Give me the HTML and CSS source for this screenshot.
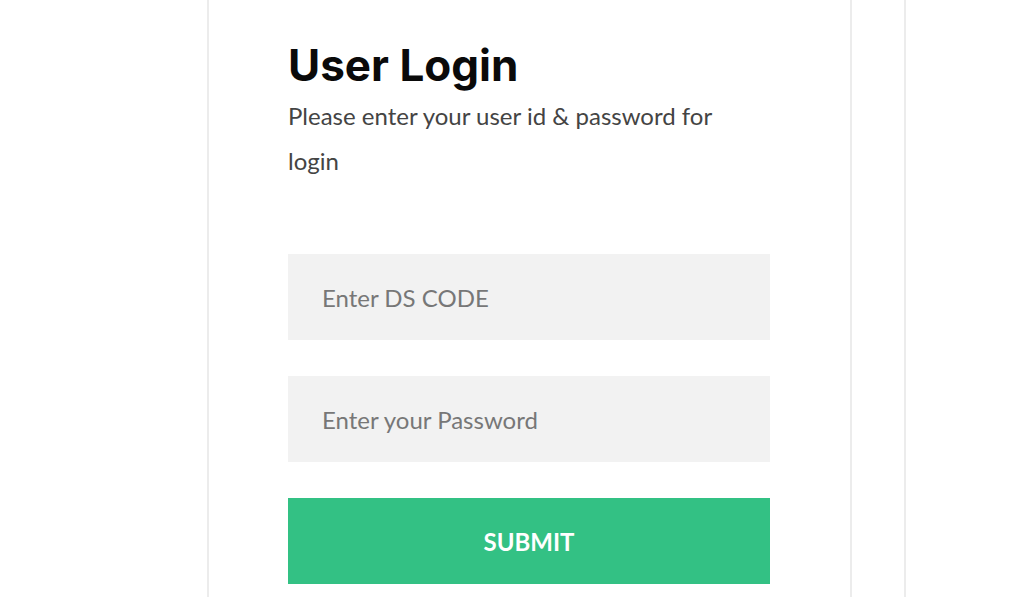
FILE: index.html
```html
<!DOCTYPE html>
<html>
<head>
<meta charset="utf-8">
<link rel="stylesheet" href="styles.css">
</head>
<body>
<div class="page">
  <div class="card">
    <h1 class="title">User Login</h1>
    <p class="subtitle">Please enter your user id &amp; password for login</p>
    <form class="form">
      <input class="field" type="text" placeholder="Enter DS CODE">
      <input class="field" type="password" placeholder="Enter your Password">
      <button class="submit" type="button">SUBMIT</button>
    </form>
  </div>
  <div class="side"></div>
</div>
</body>
</html>
```
FILE: styles.css
```css
html, body {
  margin: 0;
  padding: 0;
  background: #fff;
  height: 100%;
  overflow: hidden;
}
.page {
  display: flex;
  height: 597px;
  padding-left: 207px;
}
.card {
  border-left: 2px solid #ececec;
  border-right: 2px solid #ececec;
  padding: 38px 78px 0 79px;
  box-sizing: border-box;
  width: 645px;
}
.side {
  width: 52px;
  border-right: 2px solid #ececec;
}
.title {
  font-family: "Inter", sans-serif;
  font-weight: 700;
  font-size: 44px;
  line-height: 54px;
  margin: 0;
  color: #0a0a0a;
}
.subtitle {
  font-family: "Lato", sans-serif;
  font-size: 24px;
  line-height: 45px;
  color: #444;
  margin: 1px 0 0;
  width: 440px;
}
.form {
  display: flex;
  flex-direction: column;
  gap: 36px;
  margin-top: 71px;
  width: 482px;
}
.field {
  height: 86px;
  border: none;
  background: #f2f2f2;
  padding: 0 34px;
  font-family: "Lato", sans-serif;
  font-size: 24px;
  color: #777;
  box-sizing: border-box;
  outline: none;
}
.field::placeholder {
  color: #777;
  opacity: 1;
}
.submit {
  height: 86px;
  border: none;
  background: #33c184;
  color: #fff;
  font-family: "Lato", sans-serif;
  font-weight: 700;
  font-size: 24px;
}
```
